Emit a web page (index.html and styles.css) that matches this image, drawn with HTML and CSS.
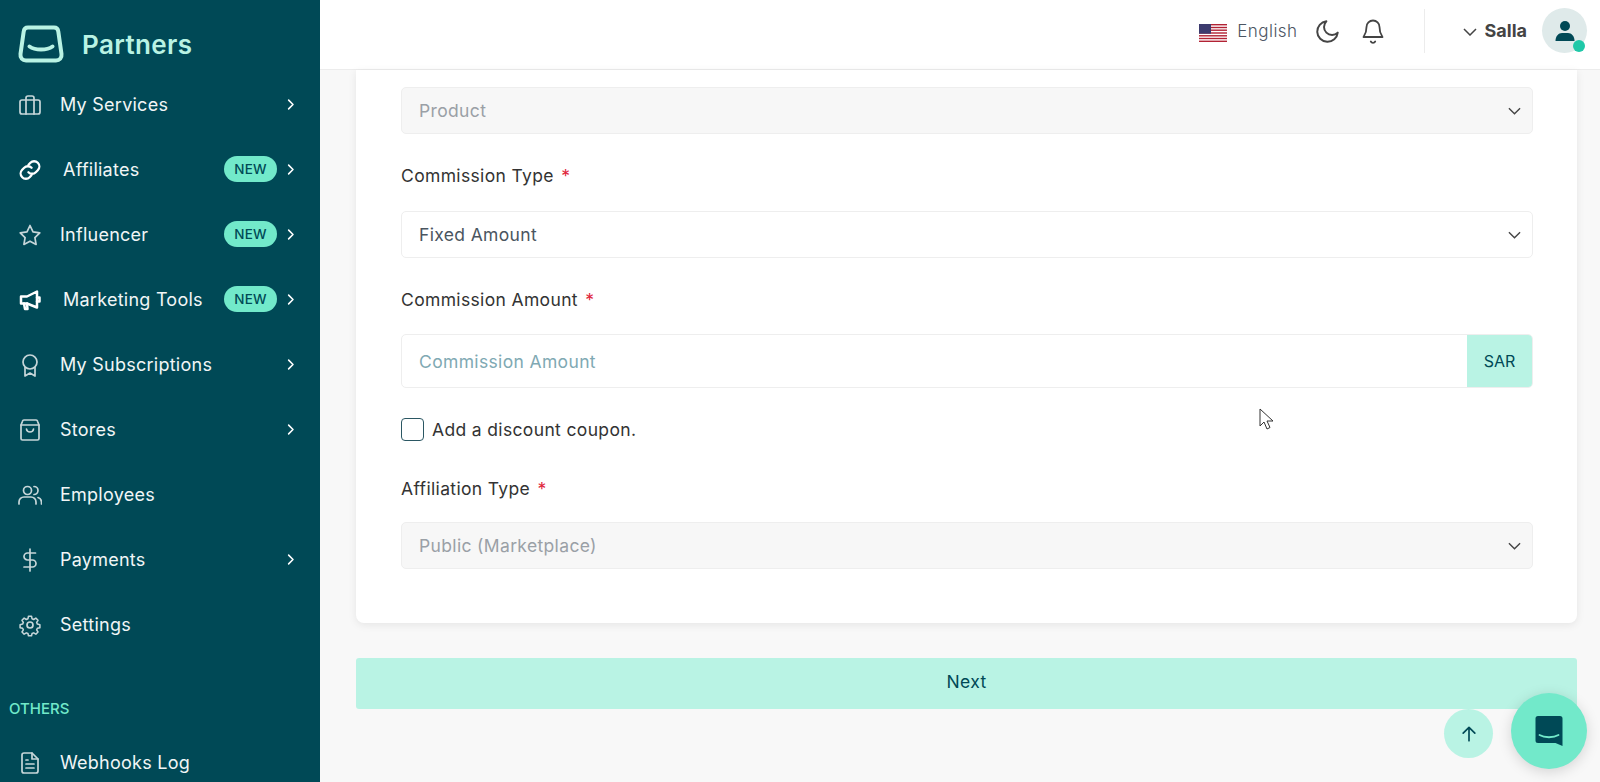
FILE: index.html
```html
<!DOCTYPE html>
<html lang="en">
<head>
<meta charset="utf-8">
<title>Partners</title>
<link rel="stylesheet" href="styles.css">
</head>
<body>
<div class="app">
  <aside class="sidebar">
    <div class="brand">
      <svg class="brand-logo" viewBox="0 0 46 38" fill="none"><path d="M10 2.500H36C38.500 2.500 40 4 40.300 6.500L43.500 29C44 33 41.500 35.500 38 35.500H8C4.500 35.500 2 33 2.500 29L5.700 6.500C6 4 7.500 2.500 10 2.500Z" stroke="#b9f3e4" stroke-width="4"/><path d="M11.500 21.500C17 25.500 29 25.500 34.500 21.500" stroke="#b9f3e4" stroke-width="4" stroke-linecap="round"/></svg>
      <span class="brand-name">Partners</span>
    </div>
    <nav class="nav">
      <a class="nav-item"><svg class="nav-icon dim" viewBox="0 0 24 24"><rect x="2" y="7" width="20" height="14" rx="2"/><path d="M16 21V5a2 2 0 0 0-2-2h-4a2 2 0 0 0-2 2v16"/></svg><span class="nav-label">My Services</span><svg class="nav-chev" viewBox="0 0 24 24"><path d="M9 5l7 7-7 7"/></svg></a>
      <a class="nav-item"><svg class="nav-icon bright link" viewBox="0 0 24 24"><path d="M10.500 6.800l1.900-2a5.200 5.200 0 0 1 7.400 7.400l-2 2a5.200 5.200 0 0 1-7.400 0"/><path d="M13.500 17.200l-1.900 2a5.200 5.200 0 0 1-7.400-7.400l2-2a5.200 5.200 0 0 1 7.400 0"/></svg><span class="nav-label shift">Affiliates</span><span class="badge">NEW</span><svg class="nav-chev" viewBox="0 0 24 24"><path d="M9 5l7 7-7 7"/></svg></a>
      <a class="nav-item"><svg class="nav-icon dim" viewBox="0 0 24 24"><path d="M12 2.500l3 6.300 6.800 1-4.900 4.800 1.200 6.800-6.100-3.200-6.100 3.200 1.200-6.800-4.900-4.800 6.800-1z"/></svg><span class="nav-label">Influencer</span><span class="badge">NEW</span><svg class="nav-chev" viewBox="0 0 24 24"><path d="M9 5l7 7-7 7"/></svg></a>
      <a class="nav-item"><svg class="nav-icon bright heavy" viewBox="0 0 24 24"><path d="M3 8.500h6L19 3.500v16L9 15.500H3z"/><path d="M6 15.500l1 5.500h2.500l-.500-5.500"/><path d="M19 9.500h2.500v4H19"/></svg><span class="nav-label shift">Marketing Tools</span><span class="badge">NEW</span><svg class="nav-chev" viewBox="0 0 24 24"><path d="M9 5l7 7-7 7"/></svg></a>
      <a class="nav-item"><svg class="nav-icon dim" viewBox="0 0 24 24"><circle cx="12" cy="9" r="7"/><path d="M7 14.500V23l5-3 5 3v-8.500"/></svg><span class="nav-label">My Subscriptions</span><svg class="nav-chev" viewBox="0 0 24 24"><path d="M9 5l7 7-7 7"/></svg></a>
      <a class="nav-item"><svg class="nav-icon dim" viewBox="0 0 24 24"><path d="M6 2h12a1.500 1.500 0 0 1 1.500 1.200L21 7v13.500a1.500 1.500 0 0 1-1.500 1.500h-15A1.500 1.500 0 0 1 3 20.500V7l1.500-3.800A1.500 1.500 0 0 1 6 2z"/><path d="M3 7h18"/><path d="M8.500 11c.500 4 6.500 4 7 0"/></svg><span class="nav-label">Stores</span><svg class="nav-chev" viewBox="0 0 24 24"><path d="M9 5l7 7-7 7"/></svg></a>
      <a class="nav-item"><svg class="nav-icon dim" viewBox="0 0 24 24"><circle cx="9.500" cy="7.500" r="4"/><path d="M1 21v-2a5 5 0 0 1 5-5h7a5 5 0 0 1 5 5v2"/><path d="M16 3.500a4 4 0 0 1 0 8"/><path d="M20 14.500a5 5 0 0 1 3.500 4.500v2"/></svg><span class="nav-label">Employees</span></a>
      <a class="nav-item"><svg class="nav-icon dim" viewBox="0 0 24 24"><path d="M12 1v22"/><path d="M17.500 5H9.500a3.500 3.500 0 0 0 0 7h5a3.500 3.500 0 0 1 0 7H6"/></svg><span class="nav-label">Payments</span><svg class="nav-chev" viewBox="0 0 24 24"><path d="M9 5l7 7-7 7"/></svg></a>
      <a class="nav-item"><svg class="nav-icon dim" viewBox="0 0 24 24"><circle cx="12" cy="12" r="3"/><path d="M10.300 2.300h3.400l.6 2.800 1.800.8 2.400-1.500 2.400 2.400-1.500 2.400.8 1.800 2.800.6v3.400l-2.800.6-.8 1.800 1.500 2.400-2.400 2.400-2.400-1.500-1.800.8-.6 2.500h-3.400l-.6-2.500-1.800-.8-2.400 1.500-2.400-2.400 1.500-2.400-.8-1.800-2.800-.6v-3.400l2.800-.6.8-1.800-1.500-2.400 2.400-2.400 2.400 1.500 1.800-.8z" transform="translate(1.200 1.200) scale(.9)"/></svg><span class="nav-label">Settings</span></a>
    </nav>
    <div class="nav-heading">OTHERS</div>
    <a class="nav-item"><svg class="nav-icon dim" viewBox="0 0 24 24"><path d="M14 2H6a2 2 0 0 0-2 2v16a2 2 0 0 0 2 2h12a2 2 0 0 0 2-2V8z"/><path d="M14 2v6h6"/><path d="M8 13h8M8 17h8M8 9h2"/></svg><span class="nav-label">Webhooks Log</span></a>
  </aside>

  <div class="main">
    <header class="topbar">
      <svg class="flag" viewBox="0 0 28 18"><rect width="28" height="18" fill="#fff"/><g fill="#b22234"><rect y="0" width="28" height="1.400"/><rect y="2.800" width="28" height="1.400"/><rect y="5.500" width="28" height="1.400"/><rect y="8.300" width="28" height="1.400"/><rect y="11.100" width="28" height="1.400"/><rect y="13.800" width="28" height="1.400"/><rect y="16.600" width="28" height="1.400"/></g><rect width="12" height="9.700" fill="#3c3b6e"/></svg>
      <span class="lang">English</span>
      <svg class="top-icon moon" viewBox="0 0 24 24"><path d="M21 13.500A9.500 9.500 0 1 1 10.500 3a7.400 7.400 0 0 0 10.500 10.500z"/></svg>
      <svg class="top-icon bell" viewBox="0 0 24 26"><path d="M18.500 9a6.500 6.500 0 0 0-13 0c0 7-3 9-3 10h19c0-1-3-3-3-10z"/><path d="M9.800 23.500a2.500 2.500 0 0 0 4.400 0"/></svg>
      <span class="divider"></span>
      <svg class="user-chev" viewBox="0 0 14 8"><path d="M1 1l6 6 6-6"/></svg>
      <span class="user-name">Salla</span>
      <span class="avatar">
        <svg class="avatar-icon" viewBox="0 0 24 24"><circle cx="12" cy="7" r="5"/><path d="M2.500 22c0-5 3-8 6.500-8h6c3.500 0 6.500 3 6.500 8z"/></svg>
        <span class="status"></span>
      </span>
    </header>

    <main class="content">
      <section class="card">
        <div class="select disabled"><span>Product</span><svg class="sel-chev" viewBox="0 0 14 8"><path d="M1 1l6 6 6-6"/></svg></div>
        <label class="label label-first">Commission Type <b>*</b></label>
        <div class="select"><span>Fixed Amount</span><svg class="sel-chev" viewBox="0 0 14 8"><path d="M1 1l6 6 6-6"/></svg></div>
        <label class="label label-amount">Commission Amount <b>*</b></label>
        <div class="input-group"><span class="placeholder">Commission Amount</span><span class="addon">SAR</span></div>
        <div class="check-row"><span class="checkbox"></span><span>Add a discount coupon.</span></div>
        <label class="label label-aff">Affiliation Type <b>*</b></label>
        <div class="select disabled"><span>Public (Marketplace)</span><svg class="sel-chev" viewBox="0 0 14 8"><path d="M1 1l6 6 6-6"/></svg></div>
      </section>
      <button class="next">Next</button>
    </main>
  </div>
</div>

<svg class="cursor" viewBox="0 0 16 24"><path d="M1 1v17l4-4 3 7 3-1.500-3-6.500h6z" fill="#fff" stroke="#333" stroke-width="1"/></svg>
<button class="to-top"><svg viewBox="0 0 24 24"><path d="M12 20V5M5 11l7-7 7 7"/></svg></button>
<button class="chat"><svg viewBox="0 0 28 32"><path d="M3 1h22a2.500 2.500 0 0 1 2.500 2.500V31l-7-3H3A2.500 2.500 0 0 1 .500 25.500v-22A2.500 2.500 0 0 1 3 1z" fill="#004956"/><path d="M4.500 20c5 3 14 3 19 0" fill="none" stroke="#72e9ca" stroke-width="1.800" stroke-linecap="round"/></svg></button>
</body>
</html>
```
FILE: styles.css
```css
* { box-sizing: border-box; }
html, body { margin: 0; height: 100%; overflow: hidden; }
body { font-family: Inter, "Open Sans", sans-serif; color: #1f3a44; background: #f8f8f8; }

.app { display: flex; height: 782px; }

.sidebar { width: 320px; flex: none; background: #004956; color: #fff; overflow: hidden; }
.brand { display: flex; align-items: center; gap: 18px; height: 72px; padding: 16px 0 0 18px; }
.brand-logo { width: 46px; height: 38px; }
.brand-name { font-size: 26px; font-weight: 600; letter-spacing: .4px; color: #b9f3e4; }

.nav { display: flex; flex-direction: column; }
.nav-item { display: flex; align-items: center; height: 65px; padding: 0 22px 0 18px; }
.nav-icon { width: 24px; height: 24px; flex: none; fill: none; stroke-width: 1.700; stroke-linecap: round; stroke-linejoin: round; }
.nav-icon.dim { stroke: #c6d6d9; }
.nav-icon.bright { stroke: #fff; }
.nav-icon.heavy { stroke-width: 2.500; }
.nav-icon.link { stroke-width: 2.300; }
.nav-label { margin-left: 18px; font-size: 18px; letter-spacing: .25px; color: #f1f6f6; flex: 1; }
.nav-label.shift { margin-left: 21px; }
.badge { width: 53px; height: 26px; line-height: 26px; border-radius: 13px; background: #72e9ca; color: #004956; text-align: center; font-size: 13.500px; font-weight: 500; letter-spacing: .2px; margin: -1px 6px 0 0; }
.nav-chev { width: 15px; height: 15px; fill: none; stroke: #fff; stroke-width: 2.500; stroke-linecap: round; stroke-linejoin: round; margin-left: auto; }
.badge + .nav-chev { margin-left: 0; }
.nav-heading { margin-top: 41px; padding-left: 9px; height: 22px; line-height: 22px; font-size: 15px; font-weight: 500; color: #72e9ca; }
.sidebar > .nav-item { margin-top: 10px; }

.main { flex: 1; min-width: 0; display: flex; flex-direction: column; }
.topbar { height: 70px; flex: none; background: #fff; border-bottom: 1px solid #ececec; display: flex; align-items: center; padding: 0 13px 8px 0; justify-content: flex-end; }
.flag { width: 28px; height: 18px; margin-top: 4px; }
.lang { margin-left: 10px; font-size: 17px; letter-spacing: .45px; color: #4b5563; font-weight: 300; }
.top-icon { fill: none; stroke: #444; stroke-width: 1.800; stroke-linecap: round; stroke-linejoin: round; }
.moon { width: 26px; height: 26px; margin-left: 17px; }
.bell { width: 24px; height: 26px; margin-left: 20px; }
.divider { width: 1px; height: 44px; background: #ececec; margin: 0 38px 0 39px; }
.user-chev { width: 14px; height: 8px; fill: none; stroke: #444; stroke-width: 1.500; margin-right: 8px; margin-top: 3px; }
.user-name { font-size: 18px; font-weight: 700; color: #444; }
.avatar { position: relative; width: 45px; height: 45px; margin-left: 15px; border-radius: 50%; background: #dfeaea; display: flex; align-items: center; justify-content: center; }
.avatar-icon { width: 24px; height: 24px; fill: #004956; }
.status { position: absolute; right: 2px; bottom: 1px; width: 12px; height: 12px; border-radius: 50%; background: #1fc8a8; }

.content { flex: 1; padding: 0 23px 0 36px; display: flex; flex-direction: column; }
.card { background: #fff; border-radius: 0 0 8px 8px; box-shadow: 0 2px 8px rgba(0,0,0,.08); padding: 17px 44px 54px 45px; }

.select { display: flex; align-items: center; justify-content: space-between; height: 47px; padding: 0 11px 0 17px; border: 1px solid #eeeeee; border-radius: 5px; font-size: 17.500px; letter-spacing: .35px; color: #4a5560; background: #fff; }
.select.disabled { background: #f7f7f7; color: #9aa0a6; }
.sel-chev { width: 13px; height: 8px; fill: none; stroke: #444; stroke-width: 1.500; }
.label { display: block; font-size: 17.500px; letter-spacing: .35px; line-height: 22px; color: #333; }
.label b { color: #e0263c; font-weight: 400; margin-left: 2px; }
.label-first { margin: 31px 0 24px; }
.label-amount { margin: 31px 0 23px; }
.label-aff { margin: 37px 0 22px; }

.input-group { display: flex; height: 54px; border: 1px solid #eeeeee; border-radius: 5px; overflow: hidden; align-items: stretch; }
.placeholder { flex: 1; padding-left: 17px; display: flex; align-items: center; font-size: 17.500px; letter-spacing: .35px; color: #7fa9b3; }
.addon { width: 65px; background: #b9f3e4; color: #004956; display: flex; align-items: center; justify-content: center; font-size: 16px; }

.check-row { display: flex; align-items: center; gap: 8px; margin-top: 30px; font-size: 17.500px; letter-spacing: .35px; color: #333; }
.checkbox { width: 23px; height: 23px; border: 1.500px solid #2b5763; border-radius: 4px; background: #fff; }

.next { margin-top: 35px; height: 51px; width: 100%; border: 0; padding: 0 0 4px; border-radius: 3px; background: #b9f3e4; color: #004956; font: 400 17.500px Inter, sans-serif; letter-spacing: .35px; }

.cursor { position: absolute; left: 1259px; top: 408px; width: 16px; height: 24px; }
.to-top { position: absolute; left: 1444px; top: 709px; width: 49px; height: 49px; border: 0; padding: 0; border-radius: 50%; background: #b9f3e4; display: flex; align-items: center; justify-content: center; }
.to-top svg { width: 20px; height: 20px; fill: none; stroke: #004956; stroke-width: 2; stroke-linecap: round; stroke-linejoin: round; }
.chat { position: absolute; left: 1511px; top: 693px; width: 76px; height: 76px; border: 0; padding: 0; border-radius: 50%; background: #72e9ca; box-shadow: 0 3px 14px rgba(0,0,0,.15); display: flex; align-items: center; justify-content: center; }
.chat svg { width: 28px; height: 32px; }
```
